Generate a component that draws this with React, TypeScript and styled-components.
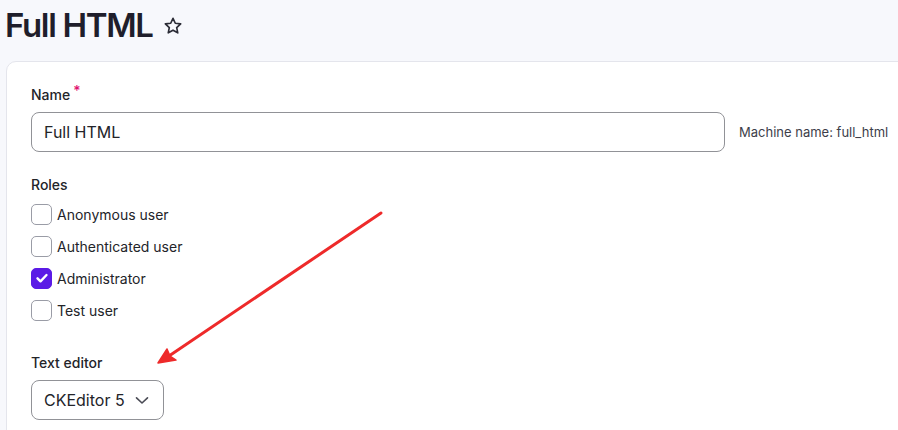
import styled, { createGlobalStyle } from 'styled-components';

const GlobalStyle = createGlobalStyle`
  html, body {
    margin: 0;
    padding: 0;
    background: #f7f8fc;
    font-family: Inter, "Noto Sans", sans-serif;
    color: #232429;
    overflow: hidden;
  }
`

const Page = styled.div`
  position: relative;
  width: 898px;
  height: 430px;
  overflow: hidden;
`

const TitleRow = styled.div`
  display: flex;
  align-items: center;
  gap: 10px;
  padding: 0 0 0 5px;
  height: 49px;
`

const Title = styled.h1`
  margin: 0;
  font-size: 33px;
  font-weight: 600;
  letter-spacing: -0.04em;
  line-height: 44px;
  color: #1f1e2b;
`

const StarButton = styled.span`
  display: flex;
  width: 20px;
  height: 20px;
  margin-top: 2px;
`

const Card = styled.div`
  margin: 12px 0 0 6px;
  width: 930px;
  background: #fff;
  border: 1px solid #e4e5ec;
  border-radius: 10px;
  padding: 24px 0 0 24px;
  box-sizing: border-box;
  height: 400px;
`

const Field = styled.div<{ $gap?: number }>`
  margin-bottom: ${p => p.$gap ?? 24}px;
`

const Label = styled.div<{ $mb?: number }>`
  font-size: 14px;
  font-weight: 500;
  line-height: 18px;
  margin-bottom: ${p => p.$mb ?? 8}px;
  color: #232429;
`

const Required = styled.span`
  color: #e0116f;
  font-size: 14px;
  vertical-align: top;
  margin-left: 3px;
  line-height: 10px;
`

const InputRow = styled.div`
  display: flex;
  align-items: center;
  gap: 14px;
`

const TextInput = styled.div`
  width: 694px;
  height: 40px;
  box-sizing: border-box;
  border: 1px solid #919297;
  border-radius: 8px;
  padding: 0 12px;
  display: flex;
  align-items: center;
  font-size: 16px;
  color: #232429;
`

const Hint = styled.span`
  font-size: 13px;
  color: #3d3e4a;
`

const CheckList = styled.div`
  display: flex;
  flex-direction: column;
`

const CheckRow = styled.label`
  display: flex;
  align-items: center;
  gap: 5px;
  height: 32px;
  font-size: 14px;
  color: #232429;
`

const Box = styled.span<{ $checked?: boolean }>`
  width: 21px;
  height: 21px;
  box-sizing: border-box;
  border-radius: 5px;
  border: 1px solid ${p => (p.$checked ? '#5b1ae6' : '#9a9ca6')};
  background: ${p => (p.$checked ? '#5b1ae6' : '#fff')};
  display: flex;
  align-items: center;
  justify-content: center;
`

const Select = styled.div`
  width: 133px;
  height: 40px;
  box-sizing: border-box;
  border: 1px solid #919297;
  border-radius: 8px;
  padding: 0 14px 0 12px;
  display: flex;
  align-items: center;
  justify-content: space-between;
  font-size: 16px;
  color: #232429;
`

const Annotation = styled.svg`
  position: absolute;
  left: 0;
  top: 0;
  pointer-events: none;
`

const roles = [
  { name: 'Anonymous user', checked: false },
  { name: 'Authenticated user', checked: false },
  { name: 'Administrator', checked: true },
  { name: 'Test user', checked: false },
];

export default function App() {
  return (
    <Page>
      <GlobalStyle />
      <TitleRow>
        <Title>Full HTML</Title>
        <StarButton>
          <svg width="20" height="20" viewBox="0 0 24 24" fill="none" stroke="#2b2c36" strokeWidth="2" strokeLinejoin="round">
            <path d="M12 2.8l2.75 5.9 6.45.75-4.78 4.4 1.28 6.37L12 17.05 6.3 20.22l1.28-6.37L2.8 9.45l6.45-.75z" />
          </svg>
        </StarButton>
      </TitleRow>
      <Card>
        <Field>
          <Label>Name<Required>*</Required></Label>
          <InputRow>
            <TextInput>Full HTML</TextInput>
            <Hint>Machine name: full_html</Hint>
          </InputRow>
        </Field>
        <Field $gap={28}>
          <Label $mb={4}>Roles</Label>
          <CheckList>
            {roles.map(r => (
              <CheckRow key={r.name}>
                <Box $checked={r.checked}>
                  {r.checked && (
                    <svg width="14" height="14" viewBox="0 0 14 14" fill="none" stroke="#fff" strokeWidth="2.4" strokeLinecap="round" strokeLinejoin="round">
                      <path d="M2.5 7.3l3 3 6-6.3" />
                    </svg>
                  )}
                </Box>
                {r.name}
              </CheckRow>
            ))}
          </CheckList>
        </Field>
        <Field>
          <Label $mb={8}>Text editor</Label>
          <Select>
            CKEditor 5
            <svg width="14" height="9" viewBox="0 0 14 9" fill="none" stroke="#4a4b55" strokeWidth="1.6" strokeLinecap="round" strokeLinejoin="round">
              <path d="M1.5 1.8l5.5 5.2 5.5-5.2" />
            </svg>
          </Select>
        </Field>
      </Card>
      <Annotation width="898" height="430" viewBox="0 0 898 430">
        <line x1="381" y1="213" x2="166" y2="358" stroke="#ee2a2a" strokeWidth="3" strokeLinecap="round" />
        <path d="M158 363 L167 349 L170 356 L176 360 Z" fill="#ee2a2a" stroke="#ee2a2a" strokeWidth="1.5" strokeLinejoin="round" />
      </Annotation>
    </Page>
  );
}
